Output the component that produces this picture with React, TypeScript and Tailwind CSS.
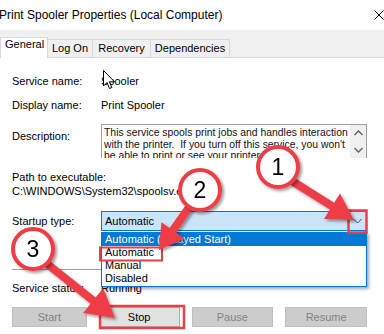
import React from 'react';

const RED = '#ee3d47';

type Pt = [number, number];

/** Build a block arrow polygon from start to tip */
function arrowPoints(s: Pt, t: Pt, sw = 4, headLen = 24, hw = 14): string {
  const dx = t[0] - s[0];
  const dy = t[1] - s[1];
  const len = Math.hypot(dx, dy);
  const ux = dx / len;
  const uy = dy / len;
  const nx = -uy;
  const ny = ux;
  const bx = t[0] - ux * headLen;
  const by = t[1] - uy * headLen;
  const pts: Pt[] = [
    [s[0] + nx * sw, s[1] + ny * sw],
    [bx + nx * sw, by + ny * sw],
    [bx + nx * hw, by + ny * hw],
    [t[0], t[1]],
    [bx - nx * hw, by - ny * hw],
    [bx - nx * sw, by - ny * sw],
    [s[0] - nx * sw, s[1] - ny * sw],
  ];
  return pts.map((p) => p.map((v) => v.toFixed(1)).join(',')).join(' ');
}

const Callout: React.FC<{ cx: number; cy: number; n: string }> = ({ cx, cy, n }) => (
  <g filter="url(#shadow)">
    <circle cx={cx} cy={cy} r={20} fill="#fff" stroke={RED} strokeWidth={4} />
    <text
      x={cx}
      y={cy + 8}
      textAnchor="middle"
      fontSize={23}
      fontFamily="'Liberation Sans', Arial, sans-serif"
      fill="#000"
    >
      {n}
    </text>
  </g>
);

const Tab: React.FC<{ label: string; w: number; active?: boolean }> = ({ label, w, active }) =>
  active ? (
    <div
      className="h-[21px] -mb-px bg-white border border-b-0 border-[#d9d9d9] flex items-start pl-[4px] pt-[1px] relative z-10"
      style={{ width: w }}
    >
      {label}
    </div>
  ) : (
    <div
      className="h-[18px] bg-[#f0f0f0] border border-l-0 border-b-0 border-[#d9d9d9] flex items-center justify-center"
      style={{ width: w }}
    >
      {label}
    </div>
  );

const Btn: React.FC<{ label: string; w: number; enabled?: boolean }> = ({ label, w, enabled }) => (
  <div
    className={
      enabled
        ? 'h-[20px] flex items-center justify-center bg-[#e1e1e1] border border-[#adadad] text-black'
        : 'h-[20px] flex items-center justify-center bg-[#cccccc] border border-[#bfbfbf] text-[#838383]'
    }
    style={{ width: w }}
  >
    {label}
  </div>
);

export default function App() {
  return (
    <div className="w-[384px] h-[334px] relative overflow-hidden bg-white text-[11px] text-black font-['Liberation_Sans',Arial,sans-serif] leading-none">
      {/* title bar */}
      <div className="h-[30px] flex items-center justify-between">
        <span className="text-[12px] -ml-px">Print Spooler Properties (Local Computer)</span>
        <svg width="10" height="10" viewBox="0 0 10 10">
          <path d="M0.5 0.5 L9.5 9.5 M9.5 0.5 L0.5 9.5" stroke="#000" strokeWidth="1" />
        </svg>
      </div>

      {/* tabs */}
      <div className="h-[28px] bg-[#f0f0f0] border-b border-[#d9d9d9] flex items-end">
        <Tab label="General" w={48} active />
        <Tab label="Log On" w={45} />
        <Tab label="Recovery" w={58} />
        <Tab label="Dependencies" w={79} />
      </div>

      {/* general page */}
      <div className="flex flex-col pl-[12px] pr-[17px]">
        <div className="mt-[15px] h-[16px] flex items-center">
          <span className="w-[89px]">Service name:</span>
          <span>Spooler</span>
        </div>
        <div className="mt-[8px] h-[16px] flex items-center">
          <span className="w-[89px]">Display name:</span>
          <span>Print Spooler</span>
        </div>
        <div className="mt-[11px] flex items-start">
          <span className="w-[89px] mt-[4px] h-[16px] flex items-center">Description:</span>
          <div className="flex-1 h-[34px] border border-b-0 border-[#a0a0a0] flex overflow-hidden">
            <div className="flex-1 pl-[2px] pt-[2px] text-[10.4px] leading-[11.5px] text-[#101020] whitespace-nowrap overflow-hidden">
              <div>This service spools print jobs and handles interaction</div>
              <div>with the printer.&nbsp; If you turn off this service, you won't</div>
              <div>be able to print or see your printers.</div>
            </div>
            <div className="w-[16px] bg-[#f0f0f0] flex flex-col items-center justify-between py-[5px]">
              <svg width="9" height="6" viewBox="0 0 9 6">
                <path d="M0.5 5 L4.5 1 L8.5 5" fill="none" stroke="#606060" strokeWidth="1.3" />
              </svg>
              <svg width="9" height="6" viewBox="0 0 9 6">
                <path d="M0.5 1 L4.5 5 L8.5 1" fill="none" stroke="#606060" strokeWidth="1.3" />
              </svg>
            </div>
          </div>
        </div>
        <div className="mt-[12px] h-[14px] flex items-center">Path to executable:</div>
        <div className="h-[14px] flex items-center">C:\WINDOWS\System32\spoolsv.exe</div>
        <div className="mt-[13px] flex items-center">
          <span className="w-[89px]">Startup type:</span>
          <div className="flex-1 h-[20px] bg-[#cce4f7] border border-[#0078d7] flex items-center justify-between pl-[3px] pr-[4px]">
            <span>Automatic</span>
            <svg width="9" height="6" viewBox="0 0 9 6">
              <path d="M0.5 1 L4.5 5 L8.5 1" fill="none" stroke="#404040" strokeWidth="1" />
            </svg>
          </div>
        </div>
        <div className="mt-[38px] h-px bg-[#a0a0a0]" />
        <div className="mt-[10px] h-[16px] flex items-center">
          <span className="w-[89px]">Service status:</span>
          <span>Running</span>
        </div>
        <div className="mt-[11px] flex items-center gap-[12px]">
          <Btn label="Start" w={75} />
          <Btn label="Stop" w={81} enabled />
          <Btn label="Pause" w={82} />
          <Btn label="Resume" w={82} />
        </div>
      </div>

      {/* open dropdown list */}
      <div className="absolute left-[101px] top-[232px] w-[266px] h-[55px] bg-white border border-t-0 border-[#0078d7] shadow-[2px_2px_3px_rgba(0,0,0,0.35)] flex flex-col">
        <div className="h-[14px] bg-[#0078d7] text-white flex items-center pl-[3px]">Automatic (Delayed Start)</div>
        <div className="h-[13px] flex items-center pl-[3px]">Automatic</div>
        <div className="h-[13px] flex items-center pl-[3px]">Manual</div>
        <div className="h-[13px] flex items-center pl-[3px]">Disabled</div>
      </div>

      {/* mouse cursor */}
      <svg className="absolute left-[103px] top-[70px]" width="13" height="20" viewBox="0 0 13 20">
        <path d="M0.5 0.5 L0.5 16 L4 12.5 L6.5 18.5 L8.8 17.5 L6.4 11.8 L11.5 11.8 Z" fill="#fff" stroke="#000" strokeWidth="1" />
      </svg>

      {/* annotations */}
      <svg className="absolute inset-0 pointer-events-none" width="384" height="334" viewBox="0 0 384 334">
        <defs>
          <filter id="shadow" x="-20%" y="-20%" width="150%" height="150%">
            <feDropShadow dx="2" dy="2" stdDeviation="1.5" floodColor="#000" floodOpacity="0.4" />
          </filter>
        </defs>
        <rect x="100" y="247.5" width="62" height="13" fill="none" stroke={RED} strokeWidth="2" />
        <rect x="348.5" y="210.5" width="18" height="22" fill="none" stroke={RED} strokeWidth="2.5" />
        <rect x="100" y="306" width="84" height="22" fill="none" stroke={RED} strokeWidth="2.5" />
        <g filter="url(#shadow)" fill={RED}>
          <polygon points={arrowPoints([292, 181], [354, 220], 4, 26, 15)} />
          <polygon points={arrowPoints([190, 206], [159, 250], 4, 24, 14)} />
          <polygon points={arrowPoints([46, 263], [115, 318], 4, 28, 16)} />
        </g>
        <Callout cx={278} cy={167} n="1" />
        <Callout cx={200} cy={190} n="2" />
        <Callout cx={33} cy={249} n="3" />
      </svg>
    </div>
  );
}
